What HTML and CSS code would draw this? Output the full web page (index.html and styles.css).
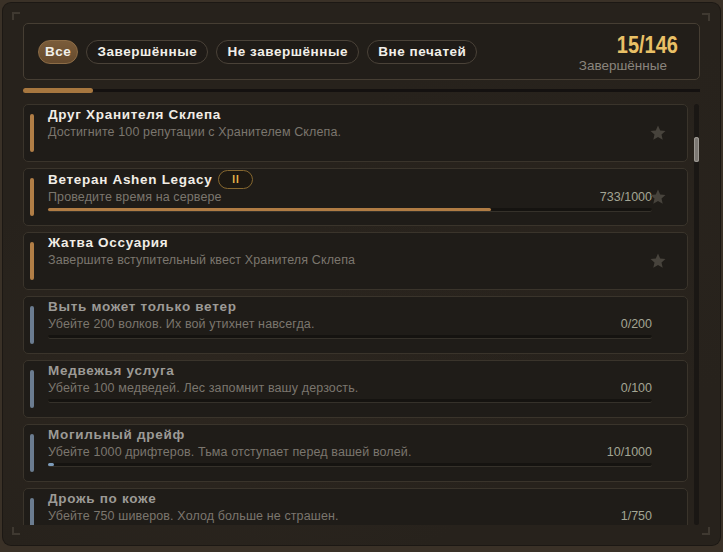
FILE: index.html
```html
<!DOCTYPE html>
<html lang="ru">
<head>
<meta charset="utf-8">
<title>Достижения</title>
<link rel="stylesheet" href="styles.css">
</head>
<body>
<div class="frame">
  <span class="corner corner-tl"></span>
  <span class="corner corner-tr"></span>
  <span class="corner corner-bl"></span>
  <span class="corner corner-br"></span>

  <header class="summary">
    <nav class="tabs">
      <button class="tab tab-active">Все</button>
      <button class="tab">Завершённые</button>
      <button class="tab">Не завершённые</button>
      <button class="tab">Вне печатей</button>
    </nav>
    <div class="tally">
      <div class="tally-count">15/146</div>
      <div class="tally-label">Завершённые</div>
    </div>
  </header>

  <div class="overall"><div class="overall-fill" style="width:10.27%"></div></div>

  <div class="list-wrap">
    <ul class="list">
      <li class="ach ach-done">
        <span class="ach-mark"></span>
        <div class="ach-body">
          <div class="ach-title">Друг Хранителя Склепа</div>
          <div class="ach-meta"><span class="ach-desc">Достигните 100 репутации с Хранителем Склепа.</span></div>
        </div>
        <svg class="ach-star" viewBox="0 0 16 16"><path d="M8 .6l2.2 4.9 5.3.5-4 3.6 1.2 5.2L8 12.1l-4.7 2.7 1.2-5.2-4-3.6 5.3-.5z"/></svg>
      </li>
      <li class="ach ach-done">
        <span class="ach-mark"></span>
        <div class="ach-body">
          <div class="ach-title">Ветеран Ashen Legacy <span class="ach-badge">II</span></div>
          <div class="ach-meta"><span class="ach-desc">Проведите время на сервере</span><span class="ach-count">733/1000</span></div>
          <div class="ach-track"><div class="ach-fill" style="width:73.3%"></div></div>
        </div>
        <svg class="ach-star" viewBox="0 0 16 16"><path d="M8 .6l2.2 4.9 5.3.5-4 3.6 1.2 5.2L8 12.1l-4.7 2.7 1.2-5.2-4-3.6 5.3-.5z"/></svg>
      </li>
      <li class="ach ach-done">
        <span class="ach-mark"></span>
        <div class="ach-body">
          <div class="ach-title">Жатва Оссуария</div>
          <div class="ach-meta"><span class="ach-desc">Завершите вступительный квест Хранителя Склепа</span></div>
        </div>
        <svg class="ach-star" viewBox="0 0 16 16"><path d="M8 .6l2.2 4.9 5.3.5-4 3.6 1.2 5.2L8 12.1l-4.7 2.7 1.2-5.2-4-3.6 5.3-.5z"/></svg>
      </li>
      <li class="ach">
        <span class="ach-mark"></span>
        <div class="ach-body">
          <div class="ach-title">Выть может только ветер</div>
          <div class="ach-meta"><span class="ach-desc">Убейте 200 волков. Их вой утихнет навсегда.</span><span class="ach-count">0/200</span></div>
          <div class="ach-track"><div class="ach-fill" style="width:0%"></div></div>
        </div>
      </li>
      <li class="ach">
        <span class="ach-mark"></span>
        <div class="ach-body">
          <div class="ach-title">Медвежья услуга</div>
          <div class="ach-meta"><span class="ach-desc">Убейте 100 медведей. Лес запомнит вашу дерзость.</span><span class="ach-count">0/100</span></div>
          <div class="ach-track"><div class="ach-fill" style="width:0%"></div></div>
        </div>
      </li>
      <li class="ach">
        <span class="ach-mark"></span>
        <div class="ach-body">
          <div class="ach-title">Могильный дрейф</div>
          <div class="ach-meta"><span class="ach-desc">Убейте 1000 дрифтеров. Тьма отступает перед вашей волей.</span><span class="ach-count">10/1000</span></div>
          <div class="ach-track"><div class="ach-fill" style="width:1%"></div></div>
        </div>
      </li>
      <li class="ach">
        <span class="ach-mark"></span>
        <div class="ach-body">
          <div class="ach-title">Дрожь по коже</div>
          <div class="ach-meta"><span class="ach-desc">Убейте 750 шиверов. Холод больше не страшен.</span><span class="ach-count">1/750</span></div>
          <div class="ach-track"><div class="ach-fill" style="width:0.13%"></div></div>
        </div>
      </li>
    </ul>
    <div class="scrollbar"><div class="scrollbar-thumb"></div></div>
  </div>
</div>
</body>
</html>
```

FILE: styles.css
```css
* {
  box-sizing: border-box;
}

html, body {
  margin: 0;
  padding: 0;
}

body {
  width: 723px;
  height: 552px;
  overflow: hidden;
  background: #3a3127;
  font-family: "Liberation Sans", Arial, sans-serif;
  padding: 3px;
}

/* outer window */
.frame {
  position: relative;
  width: 717px;
  height: 542px;
  padding: 20px;
  border-radius: 8px;
  background:
    radial-gradient(ellipse 320px 220px at 30% 70%, rgba(60, 50, 40, 0.25), transparent),
    radial-gradient(ellipse 260px 200px at 80% 40%, rgba(50, 42, 34, 0.2), transparent),
    #27221c;
  box-shadow: 0 0 0 1px #1c1814;
  display: flex;
  flex-direction: column;
}

/* little L-shaped brackets in the window corners */
.corner {
  position: absolute;
  width: 8px;
  height: 8px;
  border-color: #3f3931;
  border-style: solid;
  border-width: 0;
}
.corner-tl { top: 9px; left: 9px; border-top-width: 2px; border-left-width: 2px; }
.corner-tr { top: 10px; right: 10px; border-top-width: 2px; border-right-width: 2px; }
.corner-bl { bottom: 10px; left: 9px; border-bottom-width: 2px; border-left-width: 2px; }
.corner-br { bottom: 10px; right: 10px; border-bottom-width: 2px; border-right-width: 2px; }

/* header with filters and total */
.summary {
  height: 57px;
  flex: none;
  display: flex;
  align-items: center;
  justify-content: space-between;
  padding: 0 21px 0 14px;
  border: 1px solid #463e33;
  border-radius: 5px;
  background: #221e19;
}

.tabs {
  display: flex;
  gap: 8px;
  margin-top: 1px;
}

.tab {
  height: 24px;
  padding: 0 10px;
  border: 1px solid #4a4238;
  border-radius: 12px;
  background: #1f1b17;
  color: #f2efe9;
  font-family: "Liberation Sans", Arial, sans-serif;
  font-weight: bold;
  font-size: 13.5px;
  letter-spacing: 0.55px;
  line-height: 22px;
}

.tab-active {
  background: linear-gradient(#7a5c3a, #664a2d);
  border-color: #8c6c46;
  padding: 0 6px;
}

.tally {
  display: flex;
  flex-direction: column;
  align-items: flex-end;
  margin-top: 4px;
}

/* tall, narrow digits for the total */
.tally-count {
  color: #e9c066;
  font-weight: bold;
  font-size: 23.5px;
  line-height: 24px;
  transform: scaleX(0.85);
  transform-origin: right center;
}

.tally-label {
  color: #8a857d;
  font-size: 13.5px;
  line-height: 17px;
  margin-right: 11px;
}

/* overall progress */
.overall {
  flex: none;
  height: 3px;
  margin: 9px 0 12px;
  background: #141110;
  position: relative;
}

.overall-fill {
  height: 5px;
  margin-top: -1px;
  border-radius: 3px;
  background: #a7773f;
}

/* achievement list */
.list-wrap {
  flex: 1;
  min-height: 0;
  display: flex;
  gap: 6px;
}

.list {
  list-style: none;
  margin: 0;
  padding: 0;
  width: 665px;
  overflow: hidden;
  display: flex;
  flex-direction: column;
  gap: 6px;
}

.ach {
  position: relative;
  flex: none;
  height: 58px;
  display: flex;
  border: 1px solid #3a342b;
  border-radius: 5px;
  background: #1f1c18;
  padding: 0 35px 0 6px;
}

.ach-mark {
  flex: none;
  width: 4px;
  margin: 9px 0;
  border-radius: 2px;
  background: #6b7c90;
}
.ach-done .ach-mark {
  background: #b17e46;
}

.ach-body {
  flex: 1;
  min-width: 0;
  margin-left: 14px;
  padding-top: 1px;
}

.ach-title {
  display: flex;
  align-items: center;
  font-weight: bold;
  font-size: 13.5px;
  letter-spacing: 0.7px;
  line-height: 18px;
  color: #9c9a96;
}
.ach-done .ach-title {
  color: #f1ede6;
}

.ach-badge {
  margin-left: 6px;
  width: 35px;
  height: 19px;
  border: 1px solid #85672f;
  border-radius: 10px;
  background: #1c1812;
  color: #eab64c;
  font-size: 10px;
  line-height: 17px;
  text-align: center;
  letter-spacing: 1px;
}

.ach-meta {
  display: flex;
  justify-content: space-between;
  font-size: 12.5px;
  line-height: 16px;
}

.ach-desc {
  color: #7b766e;
  letter-spacing: 0.12px;
}

.ach-count {
  color: #a3a594;
}

.ach-track {
  height: 4px;
  margin-top: 3px;
  border-radius: 2px;
  background: #151310;
  box-shadow: inset 0 -1px 0 #35312a;
}

.ach-fill {
  height: 3px;
  border-radius: 2px;
  background: #7d9cbb;
}
.ach-done .ach-fill {
  background: #b07c44;
}

.ach-star {
  position: absolute;
  right: 21px;
  top: 50%;
  width: 16px;
  height: 16px;
  margin-top: -8px;
  fill: #47433c;
}

/* custom scrollbar */
.scrollbar {
  flex: none;
  width: 5px;
  border-radius: 3px;
  background: #1a1714;
  padding-top: 33px;
}

.scrollbar-thumb {
  height: 25px;
  border-radius: 3px;
  background: #7c7873;
  box-shadow: inset 0 0 0 1px #9d9993;
}
```
